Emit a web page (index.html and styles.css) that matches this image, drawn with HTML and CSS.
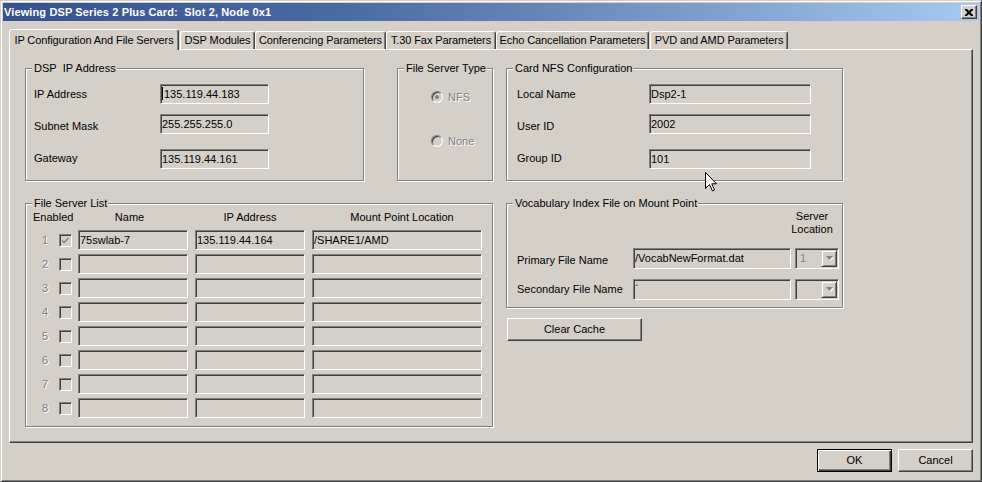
FILE: index.html
```html
<!DOCTYPE html>
<html>
<head>
<meta charset="utf-8">
<title>Viewing DSP Series 2 Plus Card</title>
<link rel="stylesheet" href="styles.css">
</head>
<body>
<div class="window">
  <div class="titlebar">
    <span class="title">Viewing DSP Series 2 Plus Card:&nbsp; Slot 2, Node 0x1</span>
    <span class="closebtn"><svg width="8" height="7" viewBox="0 0 8 7"><path d="M0 0h2l2 2l2-2h2v1l-2.5 2.5l2.5 2.5v1h-2l-2-2l-2 2h-2v-1l2.5-2.5l-2.5-2.5z" fill="#000"/></svg></span>
  </div>

  <div class="tabs">
    <div class="tab active t1">IP Configuration And File Servers</div>
    <div class="tab t2">DSP Modules</div>
    <div class="tab t3">Conferencing Parameters</div>
    <div class="tab t4">T.30 Fax Parameters</div>
    <div class="tab t5">Echo Cancellation Parameters</div>
    <div class="tab t6">PVD and AMD Parameters</div>
  </div>

  <div class="panel">
    <div class="toprow">
      <div class="group g-dsp">
        <span class="legend">DSP&nbsp; IP Address</span>
        <div class="fields dsp-fields">
          <div class="frow r1"><span class="lbl">IP Address</span><span class="edit"><span class="caret"></span>135.119.44.183</span></div>
          <div class="frow r2"><span class="lbl">Subnet Mask</span><span class="edit">255.255.255.0</span></div>
          <div class="frow r3"><span class="lbl">Gateway</span><span class="edit">135.119.44.161</span></div>
        </div>
      </div>

      <div class="group g-fst">
        <span class="legend">File Server Type</span>
        <div class="radios">
          <div class="radio-row"><span class="radio checked"></span><span class="dis">NFS</span></div>
          <div class="radio-row second"><span class="radio"></span><span class="dis">None</span></div>
        </div>
      </div>

      <div class="group g-nfs">
        <span class="legend">Card NFS Configuration</span>
        <div class="fields nfs-fields">
          <div class="frow r1"><span class="lbl">Local Name</span><span class="edit">Dsp2-1</span></div>
          <div class="frow r2"><span class="lbl">User ID</span><span class="edit">2002</span></div>
          <div class="frow r3"><span class="lbl">Group ID</span><span class="edit">101</span></div>
        </div>
      </div>
    </div>

    <div class="bottomrow">
      <div class="group g-fsl">
        <span class="legend">File Server List</span>
        <div class="fsl-head">
          <span class="h-en">Enabled</span>
          <span class="h-name">Name</span>
          <span class="h-ip">IP Address</span>
          <span class="h-mount">Mount Point Location</span>
        </div>
        <div class="fsl-row first"><span class="num dis">1</span><span class="cb"><svg width="11" height="11" viewBox="0 0 11 11"><path d="M2 4.5l2 2l4.5-4.5v2l-4.5 4.5l-2-2z" fill="#808080"/></svg></span><span class="edit name">75swlab-7</span><span class="edit ip">135.119.44.164</span><span class="edit mount">/SHARE1/AMD</span></div>
        <div class="fsl-row"><span class="num dis">2</span><span class="cb"></span><span class="edit name"></span><span class="edit ip"></span><span class="edit mount"></span></div>
        <div class="fsl-row"><span class="num dis">3</span><span class="cb"></span><span class="edit name"></span><span class="edit ip"></span><span class="edit mount"></span></div>
        <div class="fsl-row"><span class="num dis">4</span><span class="cb"></span><span class="edit name"></span><span class="edit ip"></span><span class="edit mount"></span></div>
        <div class="fsl-row"><span class="num dis">5</span><span class="cb"></span><span class="edit name"></span><span class="edit ip"></span><span class="edit mount"></span></div>
        <div class="fsl-row"><span class="num dis">6</span><span class="cb"></span><span class="edit name"></span><span class="edit ip"></span><span class="edit mount"></span></div>
        <div class="fsl-row"><span class="num dis">7</span><span class="cb"></span><span class="edit name"></span><span class="edit ip"></span><span class="edit mount"></span></div>
        <div class="fsl-row"><span class="num dis">8</span><span class="cb"></span><span class="edit name"></span><span class="edit ip"></span><span class="edit mount"></span></div>
      </div>

      <div class="rightcol">
        <div class="group g-voc">
          <span class="legend">Vocabulary Index File on Mount Point</span>
          <div class="voc-head">Server<br>Location</div>
          <div class="voc-row first">
            <span class="vlbl">Primary File Name</span>
            <span class="edit vedit">/VocabNewFormat.dat</span>
            <span class="combo"><span class="ctext">1</span><span class="cbtn"><svg width="7" height="5" viewBox="0 0 7 5"><path d="M1 1h7l-3.5 4z" fill="#fff"/><path d="M0 0h7l-3.5 4z" fill="#808080"/></svg></span></span>
          </div>
          <div class="voc-row">
            <span class="vlbl">Secondary File Name</span>
            <span class="edit vedit">´</span>
            <span class="combo"><span class="ctext"></span><span class="cbtn"><svg width="7" height="5" viewBox="0 0 7 5"><path d="M1 1h7l-3.5 4z" fill="#fff"/><path d="M0 0h7l-3.5 4z" fill="#808080"/></svg></span></span>
          </div>
        </div>
        <div class="btn clear">Clear Cache</div>
      </div>
    </div>
  </div>

  <div class="footer">
    <div class="btn default">OK</div>
    <div class="btn">Cancel</div>
  </div>

  <svg class="cursor" width="13" height="20" viewBox="0 0 13 20"><path d="M0.5 0.5V16.5L4.5 12.5L7.5 19L9.5 18L6.8 11.8H11.5Z" fill="#fff" stroke="#000" stroke-width="1"/></svg>
</div>
</body>
</html>
```

FILE: styles.css
```css
* { box-sizing: border-box; }
html, body { margin: 0; padding: 0; }
body {
  width: 982px;
  height: 482px;
  overflow: hidden;
  background: #d4d0c8;
  font: 11px/13px "Liberation Sans", Arial, sans-serif;
  color: #000;
}
.window {
  position: relative;
  width: 982px;
  height: 482px;
  padding: 2px;
  background: #d4d0c8;
  border: 1px solid;
  border-color: #d4d0c8 #404040 #404040 #d4d0c8;
  box-shadow: inset 1px 1px 0 #fff, inset -1px -1px 0 #808080;
}
.titlebar {
  height: 18px;
  display: flex;
  align-items: center;
  justify-content: space-between;
  padding: 0 2px 0 1px;
  background: linear-gradient(to right, #34528f 0%, #4a6aa4 35%, #7898c8 68%, #a6caf0 100%);
}
.title {
  color: #fff;
  font-weight: bold;
  font-size: 11px;
  letter-spacing: 0.12px;
  white-space: nowrap;
}
.closebtn {
  width: 16px;
  height: 14px;
  display: flex;
  align-items: center;
  justify-content: center;
  background: #d4d0c8;
  border: 1px solid;
  border-color: #fff #404040 #404040 #fff;
  box-shadow: inset -1px -1px 0 #808080;
}

/* tabs */
.tabs {
  display: flex;
  align-items: flex-end;
  height: 20px;
  margin: 8px 0 0 6px;
}
.tab {
  height: 18px;
  border: 1px solid;
  border-bottom: none;
  border-color: #fff #404040 transparent #fff;
  border-radius: 3px 3px 0 0;
  box-shadow: inset -1px 0 0 #808080;
  text-align: center;
  line-height: 17px;
  white-space: nowrap;
  letter-spacing: -0.1px;
  background: #d4d0c8;
}
.tab.active {
  position: relative;
  z-index: 1;
  height: 21px;
  margin-bottom: -1px;
  line-height: 20px;
}
.t1 { width: 170px; }
.t2 { width: 75px; margin-left: 1px; }
.t3 { width: 131px; }
.t4 { width: 110px; }
.t5 { width: 153px; }
.t6 { width: 138px; margin-left: 1px; }

/* panel */
.panel {
  margin: 0 6px;
  height: 394px;
  padding: 18px 0 0 15px;
  border: 1px solid;
  border-color: #fff #404040 #404040 #fff;
  box-shadow: inset -1px -1px 0 #808080;
}
.toprow { display: flex; }
.bottomrow { display: flex; margin-top: 22px; }

.group {
  position: relative;
  border: 1px solid #808080;
  box-shadow: inset 1px 1px 0 #fff, 1px 1px 0 #fff;
}
.legend {
  position: absolute;
  top: -7px;
  left: 6px;
  padding: 0 1px 0 2px;
  background: #d4d0c8;
  white-space: nowrap;
}
.g-dsp { width: 339px; height: 113px; }
.g-fst { width: 96px; height: 113px; margin-left: 33px; }
.g-nfs { width: 337px; height: 113px; margin-left: 13px; }
.g-fsl { width: 468px; height: 224px; }
.rightcol { margin-left: 13px; }
.g-voc { width: 337px; height: 105px; }

/* sunken edit */
.edit {
  display: block;
  height: 20px;
  padding: 0 1px 0 1px;
  line-height: 18px;
  white-space: nowrap;
  overflow: hidden;
  background: #d4d0c8;
  border: 1px solid;
  border-color: #808080 #fff #fff #808080;
  box-shadow: inset 1px 1px 0 #404040, inset -1px -1px 0 #d4d0c8;
}
.caret {
  display: inline-block;
  width: 1px;
  height: 13px;
  margin: 0 1px 0 0;
  vertical-align: -2px;
  background: #000;
}

.dis { color: #808080; text-shadow: 1px 1px 0 #fff; }

/* label + field rows */
.frow { display: flex; align-items: center; height: 20px; }
.frow.r1 { margin-top: 15px; }
.frow.r2 { margin-top: 10px; }
.frow.r3 { margin-top: 15px; }
.frow.r2 .lbl { padding-top: 4px; }
.frow.r3 .lbl { padding-bottom: 2px; }
.dsp-fields { padding-left: 8px; }
.dsp-fields .lbl { width: 126px; }
.dsp-fields .edit { width: 109px; }
.nfs-fields { padding-left: 10px; }
.nfs-fields .lbl { width: 132px; }
.nfs-fields .edit { width: 162px; }

/* radios */
.radios { padding: 22px 0 0 33px; }
.radio-row { display: flex; align-items: center; height: 12px; }
.radio-row.second { margin-top: 32px; }
.radio {
  position: relative;
  width: 12px;
  height: 12px;
  margin-right: 5px;
  border-radius: 50%;
  background: #d4d0c8;
  border: 1px solid;
  border-color: #808080 #fff #fff #808080;
  box-shadow: inset 1px 1px 0 #404040, inset -1px -1px 0 #d4d0c8;
}
.radio.checked::after {
  content: "";
  position: absolute;
  left: 3px;
  top: 3px;
  width: 4px;
  height: 4px;
  border-radius: 50%;
  background: #808080;
}

/* file server list */
.fsl-head { display: flex; height: 13px; margin-top: 7px; }
.h-en { width: 52px; padding-left: 7px; }
.h-name { width: 110px; text-align: center; padding-right: 7px; }
.h-ip { width: 110px; margin-left: 7px; text-align: center; }
.h-mount { width: 170px; margin-left: 7px; text-align: center; padding-left: 10px; }
.fsl-row { display: flex; align-items: center; height: 20px; margin-top: 4px; }
.fsl-row.first { margin-top: 6px; }
.num { width: 22px; text-align: right; }
.cb {
  width: 13px;
  height: 13px;
  margin-left: 11px;
  display: flex;
  align-items: center;
  justify-content: center;
  background: #d4d0c8;
  border: 1px solid;
  border-color: #808080 #fff #fff #808080;
  box-shadow: inset 1px 1px 0 #404040, inset -1px -1px 0 #d4d0c8;
}
.edit.name { width: 110px; margin-left: 6px; }
.edit.ip { width: 110px; margin-left: 7px; }
.edit.mount { width: 170px; margin-left: 7px; }

/* vocabulary */
.voc-head {
  width: 44px;
  margin: 6px 0 0 283px;
  text-align: center;
  line-height: 13px;
}
.voc-row { display: flex; align-items: center; height: 21px; margin-top: 10px; padding-left: 10px; }
.voc-row.first { margin-top: 12px; }
.voc-row.first .vlbl { padding-top: 4px; }
.vlbl { width: 116px; white-space: nowrap; }
.edit.vedit { width: 158px; height: 21px; line-height: 19px; }
.combo {
  display: flex;
  width: 44px;
  height: 21px;
  margin-left: 4px;
  padding: 1px;
  background: #d4d0c8;
  border: 1px solid;
  border-color: #808080 #fff #fff #808080;
  box-shadow: inset 1px 1px 0 #404040, inset -1px -1px 0 #d4d0c8;
}
.ctext { flex: 1; padding-left: 3px; line-height: 17px; color: #808080; }
.cbtn {
  width: 16px;
  height: 17px;
  display: flex;
  align-items: center;
  justify-content: center;
  border: 1px solid;
  border-color: #d4d0c8 #404040 #404040 #d4d0c8;
  box-shadow: inset 1px 1px 0 #fff, inset -1px -1px 0 #808080;
}

/* buttons */
.btn {
  display: flex;
  align-items: center;
  justify-content: center;
  width: 75px;
  height: 23px;
  background: #d4d0c8;
  border: 1px solid;
  border-color: #fff #404040 #404040 #fff;
  box-shadow: inset -1px -1px 0 #808080;
}
.btn.default {
  border-color: #000;
  box-shadow: inset 1px 1px 0 #fff, inset -1px -1px 0 #404040, inset -2px -2px 0 #808080;
}
.btn.clear { width: 135px; margin: 10px 0 0 1px; }
.footer {
  display: flex;
  justify-content: flex-end;
  gap: 6px;
  margin-top: 6px;
  padding-right: 6px;
}

.cursor {
  position: absolute;
  left: 704px;
  top: 171px;
}
```
